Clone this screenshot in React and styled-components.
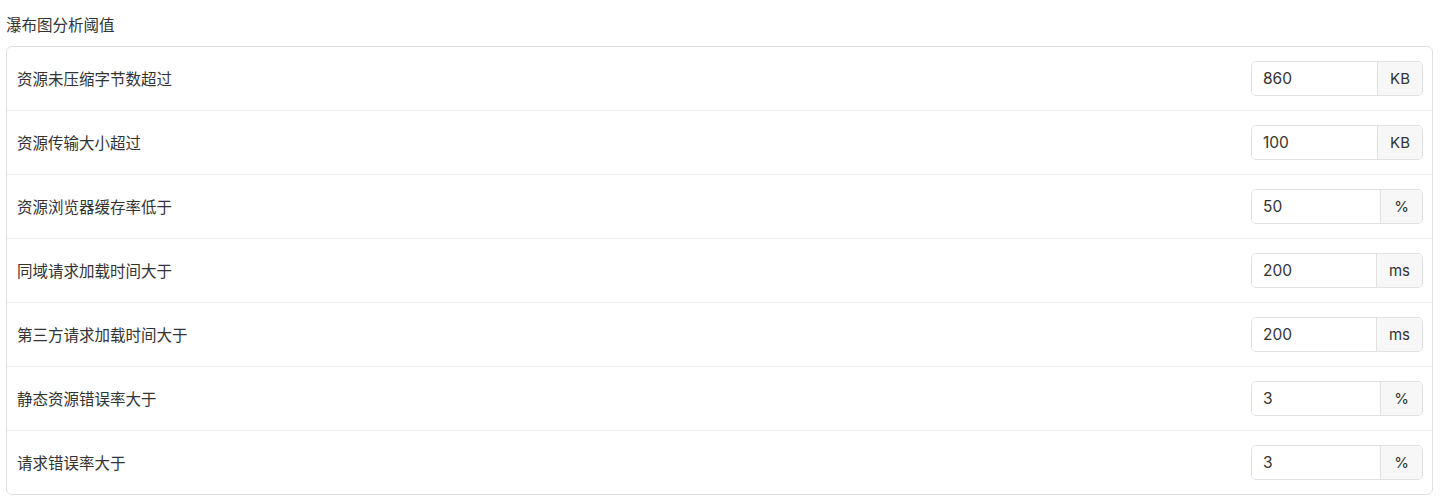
import styled, { createGlobalStyle } from 'styled-components';

const Global = createGlobalStyle`
  body {
    margin: 0;
    background: #fff;
    font-family: "Noto Sans CJK SC", "Liberation Sans", sans-serif;
    color: #333;
  }
`

const Page = styled.div`
  padding: 13px 7px 7px 6px;
`

const Title = styled.div`
  font-size: 15.5px;
  line-height: 22px;
  height: 22px;
  margin-bottom: 11px;
`

const Card = styled.div`
  border: 1px solid #e0e0e0;
  border-radius: 6px;
  background: #fff;
`

const Row = styled.div`
  height: 63px;
  display: flex;
  align-items: center;
  justify-content: space-between;
  padding: 0 9px 0 10px;
  border-top: ${props => props.first ? 'none' : '1px solid #eeeeee'};
`

const Label = styled.div`
  font-size: 15.5px;
  line-height: 20px;
  margin-top: -2px;
`

const Group = styled.div`
  display: flex;
  width: 172px;
  height: 35px;
  margin-top: -1px;
  border: 1px solid #e1e1e1;
  border-radius: 5px;
  overflow: hidden;
  box-sizing: border-box;
`

const Input = styled.input`
  flex: 1;
  min-width: 0;
  border: none;
  outline: none;
  padding: 0 11px;
  font-family: Inter, "Liberation Sans", sans-serif;
  font-size: 15.5px;
  color: #333;
  background: #fff;
`

const Addon = styled.span`
  display: flex;
  align-items: center;
  padding: 0 ${props => props.narrow ? '13px' : '12px'};
  border-left: 1px solid #e1e1e1;
  background: #f7f7f7;
  font-family: Inter, "Liberation Sans", sans-serif;
  font-size: 15px;
  color: #333;
`

const rows = [
  { label: '资源未压缩字节数超过', value: '860', unit: 'KB' },
  { label: '资源传输大小超过', value: '100', unit: 'KB' },
  { label: '资源浏览器缓存率低于', value: '50', unit: '%' },
  { label: '同域请求加载时间大于', value: '200', unit: 'ms' },
  { label: '第三方请求加载时间大于', value: '200', unit: 'ms' },
  { label: '静态资源错误率大于', value: '3', unit: '%' },
  { label: '请求错误率大于', value: '3', unit: '%' },
]

export default function App() {
  return (
    <Page>
      <Global />
      <Title>瀑布图分析阈值</Title>
      <Card>
        {rows.map((r, i) => (
          <Row key={i} first={i === 0}>
            <Label>{r.label}</Label>
            <Group>
              <Input defaultValue={r.value} />
              <Addon narrow={r.unit === '%'}>{r.unit}</Addon>
            </Group>
          </Row>
        ))}
      </Card>
    </Page>
  )
}
